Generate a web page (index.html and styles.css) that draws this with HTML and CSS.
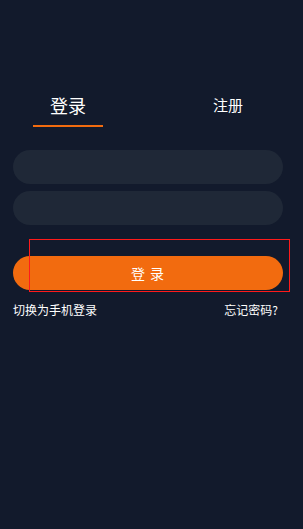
FILE: index.html
```html
<!DOCTYPE html>
<html lang="zh-CN">
<head>
    <meta charset="UTF-8">
    <meta name="viewport" content="width=device-width, initial-scale=1.0">
    <title>登录</title>
    <link rel="stylesheet" href="styles.css">
</head>
<body>
    <main class="login-page">
        <div class="tabs">
            <div class="tab active">登录</div>
            <div class="tab">注册</div>
        </div>

        <form class="login-form" onsubmit="return false;">
            <input class="field" type="text">
            <input class="field" type="password">

            <div class="submit-wrap">
                <button class="submit-btn">登 录</button>
                <div class="highlight-box"></div>
            </div>

            <div class="links">
                <a href="#">切换为手机登录</a>
                <a href="#">忘记密码?</a>
            </div>
        </form>
    </main>
</body>
</html>
```

FILE: styles.css
```css
:root {
    --bg-color: #121a2c;
    --field-color: #1f2837;
    --accent-color: #f26b0f;
    --text-color: #ffffff;
}

html, body {
    height: 100%;
}

body {
    margin: 0;
    background-color: var(--bg-color);
    color: var(--text-color);
    font-family: "Noto Sans CJK SC", "Noto Sans", sans-serif;
}

.login-page {
    padding-top: 90px;
}

.tabs {
    display: flex;
    justify-content: space-between;
    padding: 0 40px 0 33px;
}

.tab {
    width: 70px;
    text-align: center;
    font-size: 15px;
    line-height: 30px;
    height: 37px;
    box-sizing: border-box;
}

.tab.active {
    font-size: 18px;
    border-bottom: 2px solid var(--accent-color);
}

.login-form {
    display: flex;
    flex-direction: column;
    padding: 0 20px 0 13px;
    margin-top: 23px;
}

.field {
    height: 34px;
    border: none;
    border-radius: 17px;
    background-color: var(--field-color);
    margin-bottom: 7px;
    padding: 0 16px;
    outline: none;
    color: var(--text-color);
}

.submit-wrap {
    position: relative;
    margin-top: 24px;
}

.submit-btn {
    display: block;
    width: 100%;
    height: 34px;
    border: none;
    border-radius: 17px;
    background-color: var(--accent-color);
    color: var(--text-color);
    font-family: inherit;
    font-size: 14px;
    letter-spacing: 1px;
}

/* red marker frame drawn over the button */
.highlight-box {
    position: absolute;
    left: 16px;
    right: -7px;
    top: -17px;
    bottom: -2px;
    border: 1px solid #ff1a1a;
}

.links {
    display: flex;
    justify-content: space-between;
    margin-top: 11px;
    padding-right: 5px;
    font-size: 12px;
}

.links a {
    color: var(--text-color);
    text-decoration: none;
}
```
